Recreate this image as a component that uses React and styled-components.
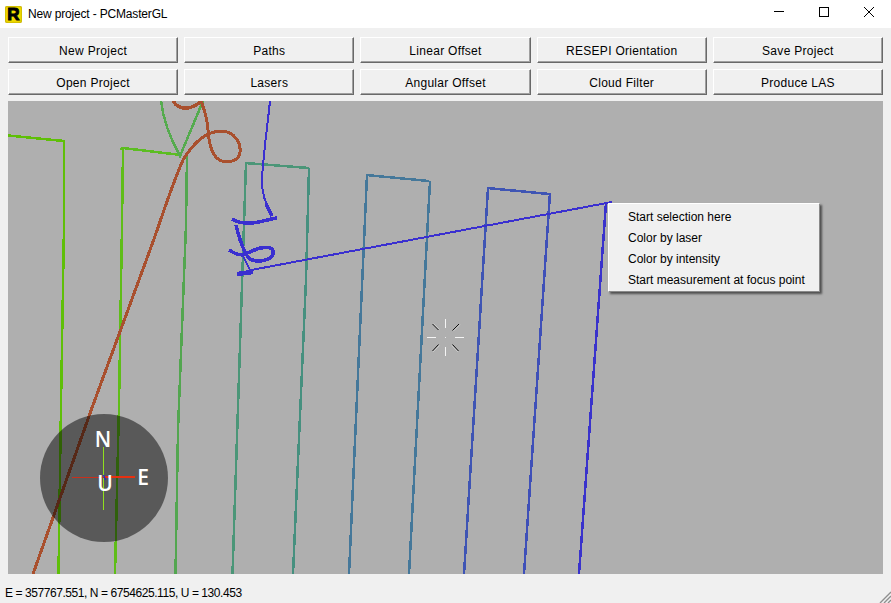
import React from "react";
import styled, { createGlobalStyle } from "styled-components";

const UI_FONT = `"Liberation Sans", Arial, sans-serif`;

const BUTTONS = [
  "New Project",
  "Paths",
  "Linear Offset",
  "RESEPI Orientation",
  "Save Project",
  "Open Project",
  "Lasers",
  "Angular Offset",
  "Cloud Filter",
  "Produce LAS",
];

const MENU_ITEMS = [
  "Start selection here",
  "Color by laser",
  "Color by intensity",
  "Start measurement at focus point",
];

// flight lines, in page coordinates (the svg viewBox starts at the viewport corner)
const TRACKS = [
  { color: "#5fbf08", width: 2.5, d: "M8 135.5L64 141L64 225L61 405L58.5 574" },
  { color: "#5cbd22", width: 2.5, d: "M120 149L123 148L181 155" },
  { color: "#5fbd18", width: 2.5, d: "M123 148L122 225L119 405L115 574" },
  { color: "#55ab4e", width: 2.5, d: "M161 101C163 118 170 138 180 156L203 101" },
  { color: "#53a650", width: 2.5, d: "M187 155L186 225L178 430L175.5 574" },
  { color: "#a9502e", width: 3, d: "M33 574L93 405L150 250C160 223 171 187 183 160C192 145 205 131 222 131C235 132 241 143 240 152C239 161 230 163 222 161C212 158 209 145 208 130C207 118 204 108 201 101" },
  { color: "#a9502e", width: 3.5, d: "M173 101C176 106 182 109 188 108C194 107 198 104 202 101" },
  { color: "#4b9678", width: 2.5, d: "M245 163L309 168" },
  { color: "#4b9678", width: 2.5, d: "M246 163L242 285L232.5 574" },
  { color: "#46907f", width: 2.5, d: "M309 168L306 280L293 574" },
  { color: "#45789a", width: 2.5, d: "M366 175L429 181" },
  { color: "#45789a", width: 2.5, d: "M367 175L349 574" },
  { color: "#45789a", width: 2.5, d: "M430 181L409 574" },
  { color: "#3f55b4", width: 2.5, d: "M487 188L549 194" },
  { color: "#3f55b4", width: 2.5, d: "M488 188L464 574" },
  { color: "#3f50b8", width: 2.5, d: "M550 193L524 574" },
  { color: "#3a33cc", width: 2.5, d: "M606 203L579 574" },
  { color: "#3a2fd0", width: 2, d: "M246 271L612 202" },
  { color: "#3a2fd0", width: 2, d: "M270 101C267 130 262 165 262 182C262 195 266 205 272 214" },
  { color: "#3a2fd0", width: 3.5, d: "M266 204L272 216" },
  { color: "#3a2fd0", width: 3.5, d: "M277 218C265 220 255 224 247 223C240 223 235 221 232 219" },
  { color: "#3a2fd0", width: 3.5, d: "M236 225C238 235 243 250 248 257C252 262 262 262 268 259C274 256 275 250 270 248C262 245 250 252 243 255C238 255 232 252 229 250" },
  { color: "#3a2fd0", width: 2, d: "M243 256L250 270" },
  { color: "#3a2fd0", width: 4.5, d: "M237 274L253 272" },
];

const GlobalStyle = createGlobalStyle`
  html, body {
    margin: 0;
    height: 100%;
    overflow: hidden;
  }
  #root {
    height: 100%;
  }
`;

const Window = styled.div`
  display: flex;
  flex-direction: column;
  height: 100%;
  background: #f0f0f0;
  color: #000;
  font-family: ${UI_FONT};
  font-size: 12px;
  position: relative;
`;

const TitleBar = styled.div`
  display: flex;
  align-items: center;
  height: 28px;
  background: #fff;
  padding-left: 5px;
`;

const AppIcon = styled.div`
  display: flex;
  align-items: center;
  justify-content: center;
  width: 17px;
  height: 17px;
  background: #f2dc00;
  border-radius: 2px;
  box-shadow: inset 0 0 2px #8a7a00;
  color: #000;
  font-family: "Liberation Sans", sans-serif;
  font-weight: 700;
  font-size: 17px;
  line-height: 17px;
  -webkit-text-stroke: 1px #000;
`;

const Title = styled.span`
  margin-left: 6px;
  flex: 1;
  letter-spacing: -0.17px;
`;

const CaptionButton = styled.div`
  display: flex;
  align-items: center;
  justify-content: center;
  width: 45px;
  height: 24px;
  margin-top: -4px;

  & svg {
    display: block;
  }
`;

const Toolbar = styled.div`
  display: grid;
  grid-template-columns: repeat(5, 1fr);
  grid-auto-rows: 26px;
  gap: 6px;
  padding: 9px 8px 6px;
`;

const ToolButton = styled.button`
  margin: 0;
  padding: 2px 0 0;
  background: #f0f0f0;
  border: 1px solid;
  border-color: #fff #696969 #696969 #fff;
  box-shadow: inset 0 -1px 0 #a0a0a0, inset -1px 0 0 #a0a0a0;
  font: inherit;
  letter-spacing: 0.3px;
  color: #000;
`;

const Viewport = styled.div`
  position: relative;
  flex: 1;
  min-height: 0;
  margin: 0 8px;
  background: #afafaf;
  overflow: hidden;
`;

const Scene = styled.svg`
  display: block;
  width: 100%;
  height: 100%;
`;

const Compass = styled.div`
  position: absolute;
  left: 32px;
  top: 313px;
  width: 128px;
  height: 128px;
  border-radius: 50%;
  background: rgba(0, 0, 0, 0.49);

  & svg {
    position: absolute;
    inset: 0;
  }
`;

const CompassLetter = styled.span`
  position: absolute;
  left: ${(p) => p.$x}px;
  top: ${(p) => p.$y}px;
  width: 24px;
  margin-left: -12px;
  text-align: center;
  font-family: "Open Sans", sans-serif;
  font-weight: 600;
  font-size: 21px;
  line-height: 20px;
  color: #fff;
`;

const ContextMenu = styled.div`
  position: absolute;
  left: 600px;
  top: 102px;
  width: 212px;
  height: 89px;
  box-sizing: border-box;
  padding: 3px 0 0 19px;
  background: #f0f0f0;
  border: 1px solid;
  border-color: #fff #8a8a8a #8a8a8a #fff;
  box-shadow: 2px 2px 2px rgba(0, 0, 0, 0.55);
`;

const MenuItem = styled.div`
  height: 21px;
  line-height: 21px;
  white-space: nowrap;
`;

const StatusBar = styled.div`
  display: flex;
  align-items: center;
  height: 29px;
  padding: 9px 0 0 5px;
  box-sizing: border-box;
  letter-spacing: -0.43px;
`;

const SizeGrip = styled.svg`
  position: absolute;
  right: 0;
  bottom: 0;
`;

const WindowControls = () => (
  <>
    <CaptionButton>
      <svg width="10" height="10" viewBox="0 0 10 10">
        <path d="M0 4.5H10" stroke="#000" fill="none" />
      </svg>
    </CaptionButton>
    <CaptionButton>
      <svg width="10" height="10" viewBox="0 0 10 10">
        <rect x="0.5" y="0.5" width="9" height="9" stroke="#000" fill="none" />
      </svg>
    </CaptionButton>
    <CaptionButton>
      <svg width="10" height="10" viewBox="0 0 10 10">
        <path d="M0 0L10 10M10 0L0 10" stroke="#000" strokeWidth="1" fill="none" />
      </svg>
    </CaptionButton>
  </>
);

// focus point marker in the middle of the view
const FocusMarker = () => (
  <g shapeRendering="crispEdges">
    <path d="M445.5 319V328M445.5 347V356M427 337.5H436M455 337.5H464" stroke="#f4f4f4" fill="none" />
    <g shapeRendering="auto">
      <path d="M432.5 324L438.5 330M459 324L452.5 330.5M432.5 351L438.5 344.5M458.5 351L452.5 344.5" stroke="#111" fill="none" />
      <path d="M433.5 323.5L439.5 329.5M460 324.5L453.5 331M433 352L439.5 345.5M458 352L451.5 345.5" stroke="#ddd" strokeWidth="0.6" fill="none" />
    </g>
    <rect x="445" y="337" width="1" height="1" fill="#e8e8e8" />
  </g>
);

const App = () => {
  return (
    <Window>
      <GlobalStyle />
      <TitleBar>
        <AppIcon>R</AppIcon>
        <Title>New project - PCMasterGL</Title>
        <WindowControls />
      </TitleBar>

      <Toolbar>
        {BUTTONS.map((label) => (
          <ToolButton key={label}>{label}</ToolButton>
        ))}
      </Toolbar>

      <Viewport>
        <Scene viewBox="8 101 875 473">
          {TRACKS.map((t, i) => (
            <path
              key={i}
              d={t.d}
              stroke={t.color}
              strokeWidth={t.width}
              fill="none"
              shapeRendering="crispEdges"
            />
          ))}
          <FocusMarker />
        </Scene>

        <Compass>
          <svg width="128" height="128" viewBox="0 0 128 128">
            <rect x="63" y="33" width="1" height="63" fill="#8fe01e" />
            <rect x="32" y="63" width="32" height="1" fill="#c8301c" />
            <rect x="64" y="62" width="31" height="2" fill="#e83010" />
            <path d="M63.5 61L65.5 66" stroke="#2a2ac0" strokeWidth="1.5" fill="none" />
          </svg>
          <CompassLetter $x={63} $y={15}>N</CompassLetter>
          <CompassLetter $x={65} $y={59}>U</CompassLetter>
          <CompassLetter $x={103} $y={53}>E</CompassLetter>
        </Compass>

        <ContextMenu>
          {MENU_ITEMS.map((item) => (
            <MenuItem key={item}>{item}</MenuItem>
          ))}
        </ContextMenu>
      </Viewport>

      <StatusBar>E = 357767.551, N = 6754625.115, U = 130.453</StatusBar>

      <SizeGrip width="12" height="12" viewBox="0 0 12 12">
        <path d="M1 12L12 1M5 12L12 5M9 12L12 9" stroke="#8f8f8f" strokeWidth="1.4" fill="none" />
      </SizeGrip>
    </Window>
  );
};

export default App;
